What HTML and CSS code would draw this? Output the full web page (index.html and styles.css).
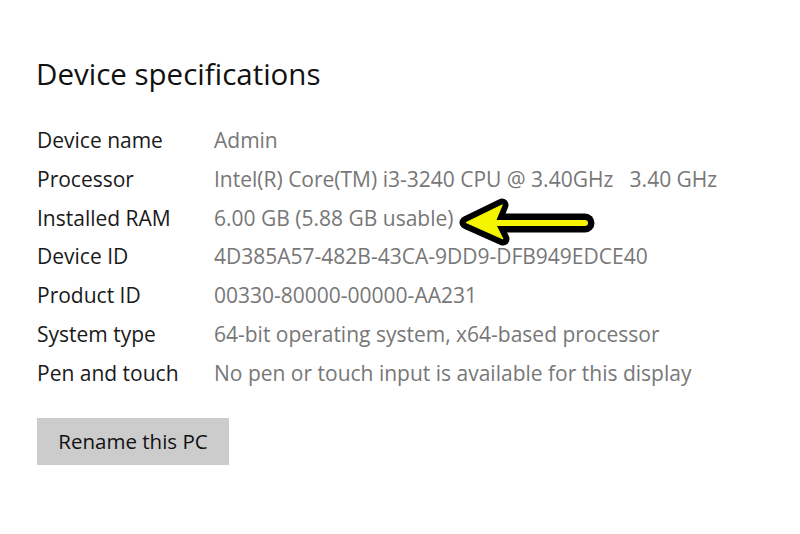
FILE: index.html
```html
<!DOCTYPE html>
<html lang="en">
<head>
<meta charset="utf-8">
<title>Device specifications</title>
<link rel="stylesheet" href="styles.css">
</head>
<body>
<main class="page">
  <h1 class="title">Device specifications</h1>
  <dl class="specs">
    <dt>Device name</dt><dd>Admin</dd>
    <dt>Processor</dt><dd>Intel(R) Core(TM) i3-3240 CPU @ 3.40GHz&nbsp;&nbsp; 3.40 GHz</dd>
    <dt>Installed RAM</dt><dd>6.00 GB (5.88 GB usable)</dd>
    <dt>Device ID</dt><dd>4D385A57-482B-43CA-9DD9-DFB949EDCE40</dd>
    <dt>Product ID</dt><dd>00330-80000-00000-AA231</dd>
    <dt>System type</dt><dd>64-bit operating system, x64-based processor</dd>
    <dt>Pen and touch</dt><dd>No pen or touch input is available for this display</dd>
  </dl>
  <button class="rename" type="button">Rename this PC</button>
  <svg class="arrow" width="145" height="55" viewBox="0 0 145 55" aria-hidden="true">
    <g stroke="#000" stroke-linejoin="round" stroke-linecap="round">
      <line x1="130" y1="28" x2="30" y2="28" stroke-width="19"/>
      <path d="M47 10 L11 27.5 L48 44 L40 28 Z" fill="#000" stroke-width="13"/>
    </g>
    <g stroke="#f5f500" stroke-linejoin="round" stroke-linecap="round" fill="#f5f500">
      <line x1="130" y1="28" x2="34" y2="28" stroke-width="6"/>
      <path d="M47 10 L11 27.5 L48 44 L40 28 Z" stroke-width="1"/>
    </g>
  </svg>
</main>
</body>
</html>
```

FILE: styles.css
```css
html, body {
  margin: 0;
  padding: 0;
  background: #ffffff;
}

.page {
  position: relative;
  width: 800px;
  height: 534px;
  box-sizing: border-box;
  padding: 56px 0 0 37px;
  font-family: "Open Sans", "Noto Sans", sans-serif;
}

.title {
  margin: 0 0 0 -1px;
  font-size: 29.5px;
  line-height: 36px;
  font-weight: 400;
  color: #111;
}

.specs {
  margin: 29px 0 0 0;
  display: grid;
  grid-template-columns: 177px 1fr;
  font-size: 21px;
  line-height: 38.8px;
}

.specs dt {
  color: #1a1a1a;
}

.specs dd {
  margin: 0;
  color: #777;
  white-space: nowrap;
}

.rename {
  margin-top: 25px;
  width: 192px;
  height: 47px;
  border: none;
  background: #cccccc;
  color: #111;
  font-family: inherit;
  font-size: 20.5px;
  padding: 0;
}

.arrow {
  position: absolute;
  left: 455px;
  top: 195px;
}
```
